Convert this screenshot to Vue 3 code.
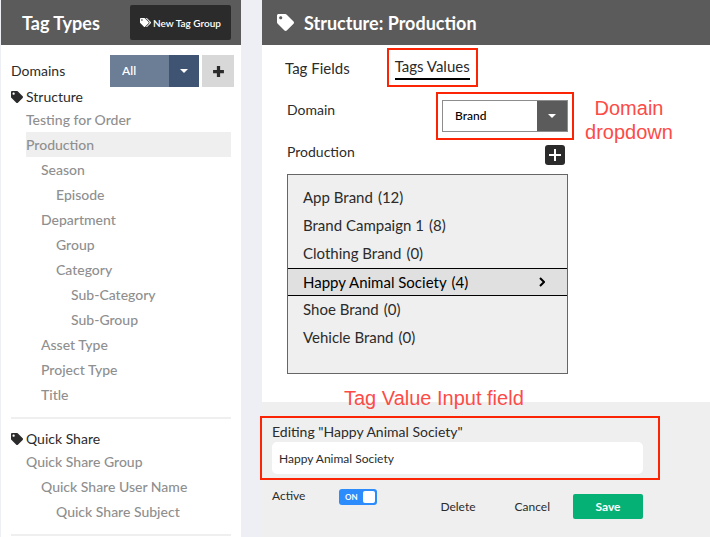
<script setup>
import { ref } from 'vue'

const tagPath =
  'M0 252.118V48C0 21.49 21.49 0 48 0h204.118a48 48 0 0 1 33.941 14.059l211.882 211.882c18.745 18.745 18.745 49.137 0 67.882L293.823 497.941c-18.745 18.745-49.137 18.745-67.882 0L14.059 286.059A48 48 0 0 1 0 252.118zM112 64c-26.51 0-48 21.49-48 48s21.49 48 48 48 48-21.49 48-48-21.49-48-48-48z'

const groups = [
  {
    name: 'Structure',
    items: [
      { name: 'Testing for Order', level: 0 },
      { name: 'Production', level: 0 },
      { name: 'Season', level: 1 },
      { name: 'Episode', level: 2 },
      { name: 'Department', level: 1 },
      { name: 'Group', level: 2 },
      { name: 'Category', level: 2 },
      { name: 'Sub-Category', level: 3 },
      { name: 'Sub-Group', level: 3 },
      { name: 'Asset Type', level: 1 },
      { name: 'Project Type', level: 1 },
      { name: 'Title', level: 1 }
    ]
  },
  {
    name: 'Quick Share',
    items: [
      { name: 'Quick Share Group', level: 0 },
      { name: 'Quick Share User Name', level: 1 },
      { name: 'Quick Share Subject', level: 2 }
    ]
  }
]

const values = [
  { name: 'App Brand', count: 12 },
  { name: 'Brand Campaign 1', count: 8 },
  { name: 'Clothing Brand', count: 0 },
  { name: 'Happy Animal Society', count: 4 },
  { name: 'Shoe Brand', count: 0 },
  { name: 'Vehicle Brand', count: 0 }
]

const currentType = ref('Production')
const selected = ref('Happy Animal Society')
const draft = ref('Happy Animal Society')
const active = ref(true)
const filter = ref('All')
const domain = ref('Brand')

function pick(name) {
  selected.value = name
  draft.value = name
}
</script>

<template>
  <div class="page">
    <aside class="sidebar">
      <header class="bar side-bar">
        <h1>Tag Types</h1>
        <button class="new-group" type="button">
          <svg class="tags-icon" viewBox="0 0 640 512" aria-hidden="true">
            <path d="M497.941 225.941L286.059 14.059A48 48 0 0 0 252.118 0H48C21.49 0 0 21.49 0 48v204.118a48 48 0 0 0 14.059 33.941l211.882 211.882c18.744 18.745 49.136 18.746 67.882 0l204.118-204.118c18.745-18.745 18.745-49.137 0-67.882zM112 160c-26.51 0-48-21.49-48-48s21.49-48 48-48 48 21.49 48 48-21.49 48-48 48zm513.941 133.823L421.823 497.941c-18.745 18.745-49.137 18.745-67.882 0l-.36-.36L527.64 323.522c16.999-16.999 26.362-39.6 26.362-63.64s-9.362-46.641-26.362-63.64L331.397 0h48.721a48 48 0 0 1 33.941 14.059l211.882 211.882c18.745 18.745 18.745 49.137 0 67.882z" />
          </svg>
          New Tag Group
        </button>
      </header>

      <div class="filter-row">
        <label for="filter">Domains</label>
        <div class="select select-blue">
          <select id="filter" v-model="filter">
            <option>All</option>
          </select>
          <span class="caret"><svg viewBox="0 0 8 4" aria-hidden="true"><path d="M0 0h8L4 4z" /></svg></span>
        </div>
        <button class="add-domain" type="button" aria-label="Add domain">
          <svg viewBox="0 0 12 12" aria-hidden="true"><path d="M4.5 1h3v3.500H11v3H7.500V11h-3V7.500H1v-3h3.500z" /></svg>
        </button>
      </div>

      <nav>
        <section v-for="group in groups" :key="group.name" class="group">
          <h2>
            <svg class="tag-icon" viewBox="0 0 512 512" aria-hidden="true"><path :d="tagPath" /></svg>
            {{ group.name }}
          </h2>
          <ul>
            <li v-for="item in group.items" :key="item.name" :class="['level-' + item.level, { current: item.name === currentType }]">
              <a href="#" @click.prevent="currentType = item.name">{{ item.name }}</a>
            </li>
          </ul>
        </section>
      </nav>
    </aside>

    <main class="main">
      <header class="bar main-bar">
        <svg class="head-icon" viewBox="0 0 512 512" aria-hidden="true"><path :d="tagPath" /></svg>
        <h1>Structure: Production</h1>
      </header>

      <div class="content">
        <nav class="tabs">
          <a href="#" @click.prevent>Tag Fields</a>
          <a href="#" class="tab-on marked" @click.prevent>Tags Values</a>
        </nav>

        <div class="form">
          <div class="field domain-field">
            <label for="domain">Domain</label>
            <div class="marked domain-mark">
              <div class="select select-plain">
                <select id="domain" v-model="domain">
                  <option>Brand</option>
                </select>
                <span class="caret"><svg viewBox="0 0 8 4" aria-hidden="true"><path d="M0 0h8L4 4z" /></svg></span>
              </div>
              <p class="note domain-note">Domain dropdown</p>
            </div>
          </div>

          <div class="field values-head">
            <h2>Production</h2>
            <button class="add-value" type="button" aria-label="Add value">
              <svg viewBox="0 0 12 12" aria-hidden="true"><path d="M5 0h2v5h5v2H7v5H5V7H0V5h5z" /></svg>
            </button>
          </div>

          <ul class="values">
            <li v-for="v in values" :key="v.name">
              <button type="button" :class="{ chosen: v.name === selected }" @click="pick(v.name)">
                <span>{{ v.name }}</span>
                <span>({{ v.count }})</span>
                <svg v-if="v.name === selected" class="chevron" viewBox="0 0 6 10" aria-hidden="true"><path d="M1 1l4 4-4 4" /></svg>
              </button>
            </li>
          </ul>
        </div>
      </div>

      <form class="editor" @submit.prevent>
        <div class="marked editor-mark">
          <p class="note input-note">Tag Value Input field</p>
          <label for="value">Editing "{{ selected }}"</label>
          <input id="value" v-model="draft" type="text" />
        </div>
        <div class="actions">
          <label for="active">Active</label>
          <span class="toggle">
            <input id="active" v-model="active" type="checkbox" role="switch" />
            <span class="toggle-text">{{ active ? 'ON' : 'OFF' }}</span>
          </span>
          <div class="buttons">
            <button type="button">Delete</button>
            <button type="button">Cancel</button>
            <button type="submit" class="save">Save</button>
          </div>
        </div>
      </form>
    </main>
  </div>
</template>

<style>
body {
  background: #eeeff4;
}
</style>

<style scoped>
.page {
  display: grid;
  grid-template-columns: 240px minmax(0, 1fr);
  gap: 21px;
  min-height: 100vh;
  padding-left: 1px;
  font-family: Lato, 'Liberation Sans', sans-serif;
  font-size: 14px;
  line-height: 20px;
  color: #2b2b2b;
  box-sizing: border-box;
}

.page * {
  box-sizing: border-box;
}

h1,
h2,
p,
ul {
  margin: 0;
  padding: 0;
  font-weight: 400;
  font-size: inherit;
}

ul {
  list-style: none;
}

a {
  color: inherit;
  text-decoration: none;
}

button,
select,
input {
  margin: 0;
  border: 0;
  font: inherit;
  color: inherit;
}

button {
  padding: 0;
  background: none;
  cursor: pointer;
}

svg {
  display: block;
  flex: none;
  fill: currentColor;
}

.sidebar,
.main {
  display: flex;
  flex-direction: column;
  background: #fff;
}

.bar {
  display: flex;
  align-items: center;
  height: 45px;
  background: #5b5b5b;
  color: #fff;
}

.bar h1 {
  font-size: 18px;
  font-weight: 700;
}

.side-bar {
  justify-content: space-between;
  padding: 0 10px 0 21px;
}

.new-group {
  display: flex;
  align-items: center;
  gap: 2px;
  height: 35px;
  padding: 0 10px;
  border-radius: 2px;
  background: #2b2b2b;
  font-size: 10px;
  font-weight: 600;
  white-space: nowrap;
}

.tags-icon {
  width: 11px;
  height: 9px;
}

.filter-row {
  display: flex;
  align-items: center;
  padding: 10px 7px 0 10px;
}

.filter-row label {
  flex: 1;
}

.select {
  display: grid;
  grid-template-columns: 1fr 30px;
  height: 32px;
}

.select select {
  grid-area: 1 / 1 / 2 / 3;
  appearance: none;
  width: 100%;
  padding: 0 12px;
  background: none;
  font-size: 12px;
  font-weight: 600;
}

.caret {
  grid-area: 1 / 2;
  display: grid;
  place-items: center;
  color: #fff;
  pointer-events: none;
}

.caret svg {
  width: 8px;
  height: 4px;
}

.select-blue {
  width: 89px;
  background: #6c7d96;
  color: #fff;
}

.select-blue .caret {
  background: #3f5372;
}

.add-domain {
  display: grid;
  place-items: center;
  width: 32px;
  height: 32px;
  margin-left: 3px;
  background: #d8d8d8;
}

.add-domain svg {
  width: 13px;
  height: 13px;
}

.group {
  margin: 0 10px;
  padding-bottom: 10px;
  border-bottom: 2px solid #efefef;
}

.group + .group {
  padding-top: 10px;
}

.group h2 {
  display: flex;
  align-items: center;
  gap: 3px;
}

.tag-icon {
  width: 12px;
  height: 12px;
}

.group ul {
  padding-left: 15px;
  color: #8f8f8f;
  font-weight: 500;
}

.group li {
  line-height: 25px;
}

.group a {
  display: block;
}

.current {
  background: #efefef;
}

.level-1 {
  padding-left: 15px;
}

.level-2 {
  padding-left: 30px;
}

.level-3 {
  padding-left: 45px;
}

.main-bar {
  gap: 10px;
  padding-left: 15px;
}

.head-icon {
  width: 17px;
  height: 17px;
}

.content {
  padding: 11px 23px 28px;
}

.tabs {
  display: flex;
  gap: 45px;
  font-size: 15px;
  line-height: 24px;
}

.tab-on {
  line-height: 21px;
  border-bottom: 2px solid #000;
}

.marked {
  position: relative;
}

.marked::after {
  content: '';
  position: absolute;
  inset: -8px -6px;
  border: 2px solid #fb2405;
  pointer-events: none;
}

.tab-on::after {
  inset: -8px -8px -9px;
}

.form {
  max-width: 283px;
  padding: 20px 0 0 2px;
}

.field {
  display: flex;
  justify-content: space-between;
}

.select-plain {
  width: 126px;
  border: 1px solid #8d8d8d;
  color: #000;
}

.select-plain select {
  font-weight: 500;
}

.select-plain .caret {
  background: #5b5b5b;
}

.note {
  position: absolute;
  color: #fd4b47;
  font-family: 'Liberation Sans', Arial, sans-serif;
  font-size: 20px;
  line-height: 24px;
}

.domain-note {
  top: -4px;
  left: 100%;
  width: 90px;
  margin-left: 16px;
  text-align: center;
}

.values-head {
  padding: 10px 3px 9px 0;
}

.add-value {
  display: grid;
  place-items: center;
  width: 20px;
  height: 20px;
  margin-top: 3px;
  border-radius: 3px;
  background: #2b2b2b;
  color: #fff;
}

.add-value svg {
  width: 12px;
  height: 12px;
}

.values {
  min-height: 200px;
  padding: 8px 0;
  border: 1px solid #666;
  background: #efefef;
  font-size: 15px;
}

.values button {
  display: flex;
  align-items: center;
  gap: 5px;
  width: 100%;
  height: 28px;
  padding: 0 22px 0 15px;
}

.values .chosen {
  margin: 1px 0 -1px;
  border: solid #000;
  border-width: 1px 0;
  background: #e0e0e0;
  color: #000;
}

.chevron {
  width: 6px;
  height: 10px;
  margin-left: auto;
  fill: none;
  stroke: currentColor;
  stroke-width: 2;
}

.editor {
  flex: 1;
  padding: 20px 67px 16px 10px;
  background: #efefef;
}

.editor-mark::after {
  inset: -6px -17px -6px -12px;
}

.editor-mark label {
  display: block;
}

.editor-mark input {
  display: block;
  width: 100%;
  height: 32px;
  padding: 0 7px;
  border-radius: 5px;
  background: #fff;
  font-size: 12px;
}

.input-note {
  bottom: 100%;
  left: 72px;
  margin-bottom: 12px;
  white-space: nowrap;
}

.actions {
  display: flex;
  align-items: flex-start;
  padding-top: 12px;
  font-size: 12px;
}

.actions label {
  width: 67px;
}

.toggle {
  display: grid;
  margin-top: 3px;
}

.toggle input {
  grid-area: 1 / 1;
  appearance: none;
  display: flex;
  justify-content: flex-start;
  width: 38px;
  height: 16px;
  padding: 2px;
  border-radius: 3px;
  background: #9a9a9a;
}

.toggle input:checked {
  justify-content: flex-end;
  background: #2c8cfb;
}

.toggle input::before {
  content: '';
  width: 12px;
  height: 12px;
  border-radius: 2px;
  background: #fff;
}

.toggle-text {
  grid-area: 1 / 1;
  padding-left: 6px;
  color: #fff;
  font-size: 8px;
  font-weight: 700;
  line-height: 16px;
  pointer-events: none;
}

.buttons {
  display: flex;
  gap: 39px;
  margin: 8px 0 0 auto;
}

.buttons button {
  height: 25px;
}

.buttons .save {
  width: 70px;
  margin-left: -16px;
  border-radius: 2px;
  background: #06b175;
  color: #fff;
  font-weight: 700;
}
</style>
